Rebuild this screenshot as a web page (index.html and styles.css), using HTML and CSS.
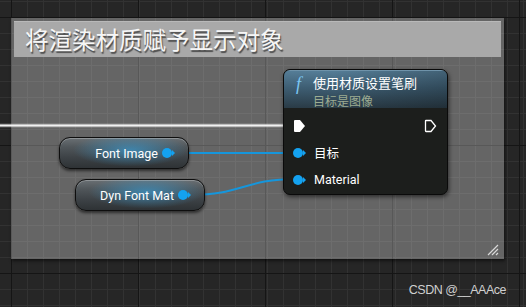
FILE: index.html
```html
<!DOCTYPE html>
<html lang="zh-CN">
<head>
    <meta charset="UTF-8">
    <title>Blueprint</title>
    <link rel="stylesheet" href="styles.css">
</head>
<body>

    <div class="graph">
        <!-- Comment box -->
        <div class="comment">
            <div class="comment-title">将渲染材质赋予显示对象</div>
            <svg class="grip" width="12" height="12" viewBox="0 0 12 12">
                <path d="M1 11 L11 1 M5 11 L11 5 M9 11 L11 9" stroke="#d8d8d8" stroke-width="1.2" fill="none"/>
            </svg>
        </div>

        <!-- Wires -->
        <svg class="wires" width="526" height="307" viewBox="0 0 526 307">
            <line x1="0" y1="125.5" x2="296" y2="125.5" stroke="rgba(255,255,255,0.25)" stroke-width="4"/>
            <line x1="0" y1="125.5" x2="296" y2="125.5" stroke="#f2f2f2" stroke-width="2"/>
            <path d="M175 153 L296 153" stroke="#1596dc" stroke-width="2" fill="none"/>
            <path d="M192 195 C 240 195, 245 179, 296 179" stroke="#1596dc" stroke-width="2" fill="none"/>
        </svg>

        <!-- Variable nodes -->
        <div class="var-node font-image">
            <span>Font Image</span>
            <span class="pin"></span>
        </div>
        <div class="var-node dyn-mat">
            <span>Dyn Font Mat</span>
            <span class="pin"></span>
        </div>

        <!-- Function node -->
        <div class="func-node">
            <div class="func-head">
                <span class="func-icon">f</span>
                <div>
                    <div class="func-title">使用材质设置笔刷</div>
                    <div class="func-sub">目标是图像</div>
                </div>
            </div>
            <div class="func-body">
                <div class="row exec-row">
                    <svg width="13" height="14" viewBox="0 0 13 14">
                        <path d="M2 1 H7 L12 7 L7 13 H2 Q1 13 1 12 V2 Q1 1 2 1 Z" fill="#fff"/>
                    </svg>
                    <svg width="13" height="14" viewBox="0 0 13 14">
                        <path d="M2 1.5 H7 L11.5 7 L7 12.5 H2 Q1.5 12.5 1.5 12 V2 Q1.5 1.5 2 1.5 Z" fill="none" stroke="#fff" stroke-width="1.3"/>
                    </svg>
                </div>
                <div class="row">
                    <span class="pin"></span>
                    <span>目标</span>
                </div>
                <div class="row">
                    <span class="pin"></span>
                    <span>Material</span>
                </div>
            </div>
        </div>

        <div class="watermark">CSDN @__AAAce</div>
    </div>

</body>
</html>
```

FILE: styles.css
```css
/* Global */
* {
    box-sizing: border-box;
}

body {
    margin: 0;
    font-family: Roboto, "Noto Sans CJK SC", sans-serif;
}

/* Graph canvas with grid */
.graph {
    position: relative;
    width: 526px;
    height: 307px;
    overflow: hidden;
    background-color: #262626;
    background-image:
        linear-gradient(to right, #151515 1px, transparent 1px),
        linear-gradient(to bottom, #151515 1px, transparent 1px),
        linear-gradient(to right, #323232 1px, transparent 1px),
        linear-gradient(to bottom, #323232 1px, transparent 1px);
    background-size: 127px 128px, 127px 128px, 16px 16px, 16px 16px;
    background-position: 11px 17px, 11px 17px, 11px 1px, 11px 1px;
}

/* Comment box */
.comment {
    position: absolute;
    left: 11px;
    top: 18px;
    width: 493px;
    height: 241px;
    padding: 3px;
    background: rgba(255, 255, 255, 0.29);
    box-shadow: 1px 2px 3px rgba(0, 0, 0, 0.55);
}

.comment-title {
    height: 36px;
    padding-left: 11px;
    background: #a9a9a9;
    border-top: 1px solid #b9b9b9;
    color: #f6f6f6;
    font-family: "Noto Sans CJK SC", sans-serif;
    font-size: 23.5px;
    line-height: 34px;
    text-shadow: 1px 2px 1px rgba(0, 0, 0, 0.55);
}

.grip {
    position: absolute;
    right: 5px;
    bottom: 3px;
}

/* Wires */
.wires {
    position: absolute;
    left: 0;
    top: 0;
}

/* Pins */
.pin {
    position: relative;
    display: inline-block;
    width: 13px;
    height: 10px;
    flex-shrink: 0;
}

.pin::before {
    content: "";
    position: absolute;
    left: 0;
    top: 0;
    width: 10px;
    height: 10px;
    border-radius: 50%;
    background: #14a2f0;
}

.pin::after {
    content: "";
    position: absolute;
    left: 10px;
    top: 2px;
    border-left: 3px solid #14a2f0;
    border-top: 3px solid transparent;
    border-bottom: 3px solid transparent;
}

/* Variable nodes */
.var-node {
    position: absolute;
    width: 130px;
    height: 32px;
    display: flex;
    align-items: center;
    justify-content: flex-end;
    gap: 4px;
    padding-right: 13px;
    border: 1px solid #0e0e0e;
    border-radius: 11px;
    color: #fff;
    font-size: 12.5px;
    background:
        radial-gradient(ellipse 45% 55% at 55% 40%, rgba(60, 150, 200, 0.75), rgba(60, 150, 200, 0) 100%),
        linear-gradient(to bottom, #6a7074 0%, #50565a 30%, #3d4246 65%, #2e3235 100%);
    box-shadow: inset 0 1px 0 rgba(255, 255, 255, 0.25), 0 2px 3px rgba(0, 0, 0, 0.55);
}

.font-image {
    left: 59px;
    top: 137px;
}

.dyn-mat {
    left: 75px;
    top: 179px;
}

/* Function node */
.func-node {
    position: absolute;
    left: 283px;
    top: 69px;
    width: 165px;
    border: 1px solid #0a0a0a;
    border-radius: 7px;
    overflow: hidden;
    background: #1c1e1c;
    box-shadow: 1px 2px 4px rgba(0, 0, 0, 0.55);
}

.func-head {
    display: flex;
    gap: 4px;
    height: 38px;
    padding: 4px 8px 0 12px;
    background:
        linear-gradient(to right, rgba(0, 0, 0, 0) 30%, rgba(0, 0, 0, 0.22) 100%),
        linear-gradient(to bottom, #557d97 0%, #3e5e73 45%, #2a3b46 100%);
    border-top: 1px solid #6f93aa;
}

.func-icon {
    width: 13px;
    color: #7cc6f2;
    font-family: "Liberation Serif", serif;
    font-style: italic;
    font-size: 18px;
    line-height: 18px;
}

.func-title {
    color: #fff;
    font-family: "Noto Sans CJK SC", sans-serif;
    font-size: 13px;
    line-height: 16px;
}

.func-sub {
    margin-top: 2px;
    color: #9dac92;
    font-family: "Noto Sans CJK SC", sans-serif;
    font-size: 12px;
    line-height: 16px;
}

.func-body {
    padding: 4px 0 1px 9px;
}

.row {
    display: flex;
    align-items: center;
    gap: 8px;
    height: 27px;
    color: #fff;
    font-size: 12.5px;
}

.exec-row {
    justify-content: space-between;
    padding-right: 10px;
}

/* Watermark */
.watermark {
    position: absolute;
    right: 20px;
    top: 283px;
    color: #cfcfcf;
    font-family: "Liberation Sans", sans-serif;
    font-size: 12.5px;
    letter-spacing: -0.5px;
}
```
